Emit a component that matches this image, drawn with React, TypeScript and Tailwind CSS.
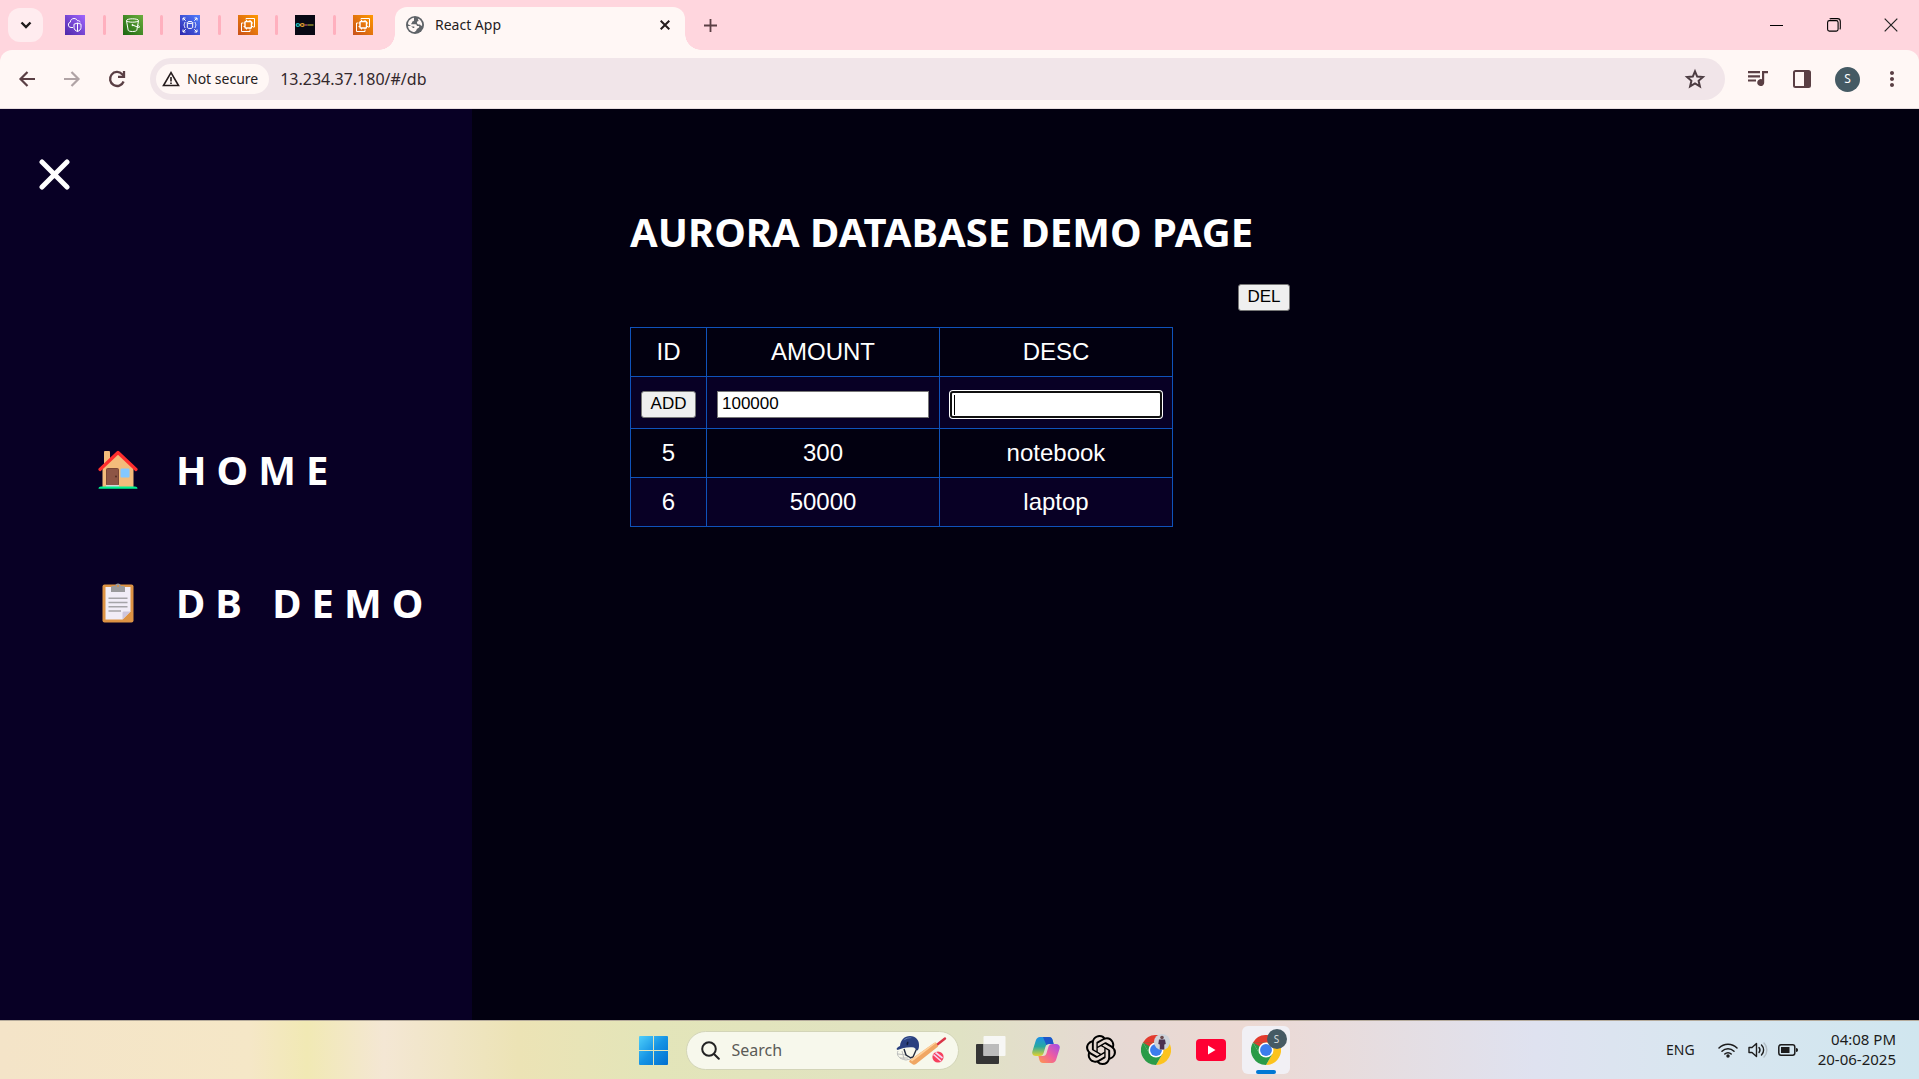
import React, { useId, useState } from "react";
import { MdMoreVert } from "react-icons/md";
import { SiOpenai } from "react-icons/si";

type IconProps = { className?: string };

/* ---------- Browser tab favicons ---------- */

function AwsTile({ from, to, children }: { from: string; to: string; children: React.ReactNode }) {
  const id = useId();
  return (
    <svg viewBox="0 0 20 20" className="size-5" aria-hidden="true">
      <defs>
        <linearGradient id={id} x1="0" y1="1" x2="1" y2="0">
          <stop offset="0" stopColor={from} />
          <stop offset="1" stopColor={to} />
        </linearGradient>
      </defs>
      <rect width="20" height="20" fill={`url(#${id})`} />
      <g fill="none" stroke="#fff" strokeWidth="1" strokeLinejoin="round">
        {children}
      </g>
    </svg>
  );
}

function VpcIcon() {
  return (
    <AwsTile from="#4d27a8" to="#a166ff">
      <path d="M8 12.500H6a2.700 2.700 0 0 1-.7-5.300C5.300 5 7 3.500 9 3.500c1.600 0 3 .9 3.600 2.300 1.300-.3 2.300.3 2.600 1.500" />
      <path d="M12.500 8l3.500 1.200v3.300c0 2-1.500 3.200-3.500 4-2-.8-3.500-2-3.500-4V9.200zM12.500 8v8.500" />
    </AwsTile>
  );
}

function S3Icon() {
  return (
    <AwsTile from="#1b660f" to="#6cae3e">
      <ellipse cx="9.500" cy="5.500" rx="6" ry="1.700" />
      <path d="M3.500 5.700l1.700 9.600c.5 1.600 8.100 1.600 8.600 0l1.700-9.600M9.500 10l5.500 2.200c2 .7 2.300-.6-.3-2" />
      <circle cx="9.500" cy="10" r=".6" fill="#fff" />
    </AwsTile>
  );
}

function RdsIcon() {
  return (
    <AwsTile from="#2e27ad" to="#527fff">
      <ellipse cx="10" cy="7.500" rx="2.700" ry="1" />
      <path d="M7.300 7.500v5c0 1.300 5.400 1.300 5.400 0v-5M5.300 7c-1 .5-.5 2.300-1.500 3 1 .7.5 2.500 1.500 3M14.700 7c1 .5.5 2.300 1.500 3-1 .7-.5 2.500-1.500 3" />
      <path d="M3 5.500V3h2.500M3 3l2.700 2.700M17 5.500V3h-2.500M17 3l-2.700 2.700M3 14.500V17h2.500M3 17l2.700-2.700M17 14.500V17h-2.500M17 17l-2.700-2.700" />
    </AwsTile>
  );
}

function Ec2Icon() {
  return (
    <AwsTile from="#c8511b" to="#ff9900">
      <rect x="7" y="6.500" width="6.500" height="6.500" rx=".8" strokeWidth="1.400" />
      <path d="M8 4.500V3.500h8.500v8.500h-1.500M5 8H3.500v8.500H12V15M8.500 6.500V5M12 6.500V5M7 8H5.500M7 11.500H5.500M13.500 8H15M13.500 11.500H15M8.500 13v1.500M12 13v1.500" />
    </AwsTile>
  );
}

function LoopIcon() {
  return (
    <svg viewBox="0 0 20 20" className="size-5" aria-hidden="true">
      <rect width="20" height="20" fill="#080914" />
      <path d="M5 10C4 8 1.200 8.200 1.200 10S4 12 5 10" fill="none" stroke="#20c8c8" strokeWidth="1.200" />
      <path d="M5 10c1-2 4.200-1.800 4.200 0S6 12 5 10" fill="none" stroke="#e9a02e" strokeWidth="1.200" />
      <path d="M10 10h2.500" stroke="#a0446d" strokeWidth="1.500" />
      <path d="M12.500 10h6" stroke="#8c8a2a" strokeWidth="1.500" />
    </svg>
  );
}

/* ---------- Window chrome ---------- */

const pinnedTabs = [
  { label: "VPC console", Icon: VpcIcon },
  { label: "S3 console", Icon: S3Icon },
  { label: "RDS console", Icon: RdsIcon },
  { label: "EC2 console", Icon: Ec2Icon },
  { label: "Portfolio", Icon: LoopIcon },
  { label: "EC2 instances", Icon: Ec2Icon },
];

function TabStrip() {
  return (
    <header className="flex h-[50px] bg-[#ffd6de]">
      <button aria-label="Search tabs" className="mt-2 ml-2 flex h-[34px] w-[35px] items-center justify-center rounded-xl bg-[#ffecef]">
        <svg viewBox="0 0 12 8" className="h-2 w-3" fill="none" stroke="#1f1a1b" strokeWidth="2.400">
          <path d="M1.500 1.500L6 6l4.500-4.500" />
        </svg>
      </button>
      <div className="ml-[3px] flex">
        {pinnedTabs.map(({ label, Icon }, i) => (
          <button key={label} aria-label={label} className="relative flex w-[58px] items-center justify-center even:w-[57px]">
            <Icon />
            {i < pinnedTabs.length - 1 && <span className="absolute top-[15px] -right-0.5 h-5 w-[3px] rounded-full bg-[#ffb0be]" />}
          </button>
        ))}
      </div>
      <div className="relative mt-[7px] ml-1 flex w-[290px] items-center rounded-t-xl bg-[#fff7f5] pr-3 pl-[11px]">
        <span className="absolute bottom-0 -left-4 size-4 bg-[radial-gradient(circle_at_0_0,transparent_15.5px,#fff7f5_16px)]" />
        <span className="absolute -right-4 bottom-0 size-4 bg-[radial-gradient(circle_at_100%_0,transparent_15.5px,#fff7f5_16px)]" />
        <svg viewBox="0 0 18 18" className="mb-2 size-[18px]" aria-hidden="true">
          <circle cx="9" cy="9" r="9" fill="#5f6368" />
          <path d="M2 8.300c0-3.500 2.600-6.100 6-6.600v1.600c.3 1.700-.5 2-1.700 2.300-.2 1.500-.8 1.700-1.300 2.700h4.500c1.300 0 1.200 1 1.500 1.800h1.500c.8 0 1 .7.5 1.400l-2.200 1.600c-.4 1.900-1.400 2.500-2.300 2.900C5 16 2.300 13.500 2 10h3l2 2h1.300v-1.500H6z" fill="#fff7f5" />
          <path d="M11.800 2.400c2.800 1.100 4.600 3.800 4.400 7-1 .6-1.800.2-2.200-.9-1.500.2-2.600-.2-3-1.500-.2-1.300.3-2 1.600-2z" fill="#fff7f5" />
        </svg>
        <span className="mb-2 ml-[11px] flex-1 text-sm text-[#251c1d]">React App</span>
        <button aria-label="Close tab" className="mb-2 flex size-4 items-center justify-center">
          <svg viewBox="0 0 10 10" className="size-2.5" stroke="#251c1d" strokeWidth="2">
            <path d="M.7.7l8.600 8.600M9.300.7L.7 9.300" />
          </svg>
        </button>
      </div>
      <button aria-label="New tab" className="ml-[15px] flex w-5 items-center justify-center">
        <svg viewBox="0 0 13 13" className="size-[13px]" stroke="#5a3f44" strokeWidth="1.800">
          <path d="M6.500 0v13M0 6.500h13" />
        </svg>
      </button>
      <div className="ml-auto flex">
        <button aria-label="Minimize" className="flex w-[57px] items-center justify-center">
          <svg viewBox="0 0 13 13" className="size-[13px]" stroke="#000" shapeRendering="crispEdges">
            <path d="M0 6.500h13" />
          </svg>
        </button>
        <button aria-label="Restore" className="flex w-[57px] items-center justify-center">
          <svg viewBox="0 0 14 14" className="size-3.5" fill="none" stroke="#000" strokeWidth="1.100">
            <rect x=".6" y="2.600" width="10.500" height="10.500" rx="1.800" />
            <path d="M2.700 1c.3-.3.800-.4 1.300-.4h6.500c1.700 0 2.800 1.200 2.800 2.800V10c0 .6-.2 1-.5 1.300" />
          </svg>
        </button>
        <button aria-label="Close" className="flex w-[57px] items-center justify-center">
          <svg viewBox="0 0 14 14" className="size-3.5" stroke="#222" strokeWidth="1.200">
            <path d="M.7.7l12.600 12.600M13.300.7L.7 13.300" />
          </svg>
        </button>
      </div>
    </header>
  );
}

function Toolbar() {
  return (
    <div className="bg-[#ffd6de]">
      <nav className="flex h-[59px] items-center rounded-t-xl border-b border-[#e6dcde] bg-[#fff7f5] px-[15px] text-[#5a3f44]">
        <button aria-label="Back">
          <svg viewBox="0 0 24 24" className="size-6" fill="none" stroke="currentColor" strokeWidth="2.200">
            <path d="M20 12H6M12.500 5L5.500 12l7 7" />
          </svg>
        </button>
        <button aria-label="Forward" className="ml-[21px] text-[#b0a3a5]">
          <svg viewBox="0 0 24 24" className="size-6" fill="none" stroke="currentColor" strokeWidth="2.200">
            <path d="M4 12h14M11.500 5l7 7-7 7" />
          </svg>
        </button>
        <button aria-label="Reload" className="ml-[21px]">
          <svg viewBox="0 0 24 24" className="size-6" fill="none" stroke="currentColor" strokeWidth="2.300">
            <path d="M18.600 14.500A7 7 0 1 1 17.200 7.200L19 9" />
            <path d="M19 4v5.800h-6" />
          </svg>
        </button>
        <div className="ml-[21px] flex h-[42px] flex-1 items-center rounded-full bg-[#f1e5e9] pr-[18px] pl-1.5">
          <button className="flex h-[30px] items-center gap-[7px] rounded-full bg-[#fff7f5] pr-[11px] pl-1.5 text-sm text-[#251c1d]">
            <svg viewBox="0 0 18 16" className="h-4 w-[18px]" fill="none" stroke="#251c1d" strokeWidth="1.600">
              <path d="M9 1.700L1.500 14.500h15zM9 6v4.500M9 11.500v1.600" />
            </svg>
            Not secure
          </button>
          <input aria-label="Address" defaultValue="13.234.37.180/#/db" className="ml-[11px] flex-1 bg-transparent text-base text-[#33282c] outline-none" />
          <button aria-label="Bookmark">
            <svg viewBox="0 0 24 24" className="size-6" fill="none" stroke="#4c3c42" strokeWidth="2">
              <path d="M12 4.300l2.200 5.300 5.700.5-4.300 3.700 1.300 5.600-4.900-3-4.900 3 1.300-5.600-4.300-3.700 5.700-.5z" />
            </svg>
          </button>
        </div>
        <button aria-label="Media controls" className="ml-[21px]">
          <svg viewBox="0 0 24 24" className="size-6" fill="currentColor">
            <path d="M2 4h12v2.200H2zM2 8.200h12v2.200H2zM2 12.400h8v2.200H2zM16 4h6v2.300h-3.800v9.200A3.500 3.500 0 1 1 16 12.300z" />
          </svg>
        </button>
        <button aria-label="Side panel" className="ml-5">
          <svg viewBox="0 0 24 24" className="size-6">
            <rect x="4" y="4" width="16" height="16" rx="1.500" fill="none" stroke="currentColor" strokeWidth="2" />
            <path d="M14 4h6v16h-6z" fill="currentColor" />
          </svg>
        </button>
        <button aria-label="Profile" className="ml-[21px] flex size-[25px] items-center justify-center rounded-full bg-[#455a64] text-xs text-white">S</button>
        <button aria-label="Menu" className="ml-5"><MdMoreVert className="size-6" /></button>
      </nav>
    </div>
  );
}

/* ---------- Web page ---------- */

function HouseIcon({ className }: IconProps) {
  return (
    <svg viewBox="0 0 40 40" className={className} aria-hidden="true">
      <path d="M6 2.200C6 1.500 6.500 1 7.200 1h3.600c.7 0 1.200.5 1.200 1.200V16H6z" fill="#f3bc7b" />
      <path d="M20 3L4.500 17.500V37h31V17.500z" fill="#f3bc7b" />
      <path d="M2 19.500L20 2.500l18 17" fill="none" stroke="#ff2d2d" strokeWidth="3.200" strokeLinecap="round" strokeLinejoin="round" />
      <rect x="8.500" y="18.500" width="12" height="17" rx="1" fill="#8d5545" stroke="#7a4636" />
      <circle cx="18" cy="26.500" r=".9" fill="#4c2a20" />
      <rect x="22.500" y="18.500" width="9" height="9" rx="1.200" fill="#84c8ff" />
      <path d="M8 35h13v2H8z" fill="#d6d6d6" />
      <path d="M.5 38.700c0-1.400 1.200-2.200 2.500-2.200h34c1.300 0 2.500.8 2.500 2.200z" fill="#00f08e" />
    </svg>
  );
}

function ClipboardIcon({ className }: IconProps) {
  return (
    <svg viewBox="0 0 40 40" className={className} aria-hidden="true">
      <rect x="4.500" y="1.500" width="31" height="38" rx="2" fill="#dd9344" />
      <path d="M7.500 4h25v24.500l-8 8h-17z" fill="#f1edf7" />
      <path d="M24.500 36.500V30c0-1 .6-1.500 1.500-1.500h6.500z" fill="#cdc5dc" />
      <path d="M13 4.500c0-.8.600-1.500 1.500-1.500h2.700c.4-3.200 5.200-3.200 5.600 0h2.700c.9 0 1.500.7 1.500 1.500V9H13z" fill="#9a9a9c" />
      <circle cx="20" cy="3" r="1" fill="#dd9344" />
      <path d="M10.500 15.200h19M10.500 19.500h19M10.500 23.700h19M10.500 28h12.500" stroke="#a5a4a8" strokeWidth="1.500" />
    </svg>
  );
}

const links = [
  { label: "HOME", href: "#/", Icon: HouseIcon },
  { label: "DB DEMO", href: "#/db", Icon: ClipboardIcon },
];

function Sidebar() {
  return (
    <aside className="w-[472px] shrink-0 bg-[#080025]">
      <button aria-label="Close menu" className="mt-[49px] ml-[38px] block">
        <svg viewBox="0 0 32 32" className="size-8" stroke="#fff" strokeWidth="5" strokeLinecap="round">
          <path d="M4 4l25 25M29 4L4 29" />
        </svg>
      </button>
      <nav className="mt-[250px] ml-[98px]">
        <ul className="space-y-[73px]">
          {links.map(({ label, href, Icon }) => (
            <li key={label}>
              <a href={href} className="flex h-[60px] items-center whitespace-nowrap text-white">
                <Icon className="size-10" />
                <span className="ml-[38px] text-[40px] leading-[60px] font-bold tracking-[10px]">{label}</span>
              </a>
            </li>
          ))}
        </ul>
      </nav>
    </aside>
  );
}

const rows = [
  { id: 5, amount: 300, desc: "notebook" },
  { id: 6, amount: 50000, desc: "laptop" },
];

const cell = "border border-[#0f52ba] text-center font-normal";
const formButton = "h-[27px] rounded-[3px] border border-[#767676] bg-[#efefef] pb-0.5 text-[17px] leading-5 text-black";

function DatabasePage() {
  const [amount, setAmount] = useState("100000");
  const [desc, setDesc] = useState("");
  return (
    <main className="flex-1 bg-[#020010] pt-24 pl-[158px] text-white">
      <div className="w-[660px]">
        <h1 className="text-[40px] leading-[54px] font-bold whitespace-nowrap">AURORA DATABASE DEMO PAGE</h1>
        <div className="mt-[25px] flex justify-end font-['Liberation_Sans',Arial,sans-serif]">
          <button className={`w-[52px] ${formButton}`}>DEL</button>
        </div>
        <table className="mt-4 w-[543px] table-fixed border-collapse font-['Liberation_Sans',Arial,sans-serif] text-2xl leading-7">
          <thead>
            <tr className="h-[49px]">
              <th scope="col" className={`w-[76px] ${cell}`}>ID</th>
              <th scope="col" className={cell}>AMOUNT</th>
              <th scope="col" className={cell}>DESC</th>
            </tr>
          </thead>
          <tbody>
            <tr className="h-[52px] bg-[#080025]">
              <td className={cell}>
                <button className={`mx-auto mt-1 block w-[55px] ${formButton}`}>ADD</button>
              </td>
              <td className={cell}>
                <input
                  aria-label="Amount"
                  value={amount}
                  onChange={(e) => setAmount(e.target.value)}
                  className="mx-auto mt-1 block h-[27px] w-[212px] border border-[#767676] bg-white px-1 pb-0.5 text-[17px] leading-5 text-black outline-none"
                />
              </td>
              <td className={cell}>
                <div className="relative mx-auto mt-1 h-[27px] w-[212px]">
                  <input
                    aria-label="Description"
                    value={desc}
                    onChange={(e) => setDesc(e.target.value)}
                    className="block size-full rounded-[3px] border-2 border-[#101010] bg-white px-0.5 text-[17px] text-black caret-transparent ring-1 ring-white outline-none"
                  />
                  <span className="absolute top-1 left-1 h-5 w-px bg-black" />
                </div>
              </td>
            </tr>
            {rows.map((row) => (
              <tr key={row.id} className="h-[49px] odd:bg-[#080025]">
                <td className={cell}>{row.id}</td>
                <td className={cell}>{row.amount}</td>
                <td className={cell}>{row.desc}</td>
              </tr>
            ))}
          </tbody>
        </table>
      </div>
    </main>
  );
}

/* ---------- Taskbar ---------- */

function WindowsLogo() {
  const id = useId();
  return (
    <svg viewBox="0 0 29 29" className="size-[29px]" aria-hidden="true">
      <defs>
        <linearGradient id={id} gradientUnits="userSpaceOnUse" x1="0" y1="0" x2="29" y2="29">
          <stop offset="0" stopColor="#4fcffa" />
          <stop offset=".5" stopColor="#1593e4" />
          <stop offset="1" stopColor="#006fd0" />
        </linearGradient>
      </defs>
      <path d="M0 1a1 1 0 0 1 1-1h13v14H0zM15 0h13a1 1 0 0 1 1 1v13H15zM0 15h14v14H1a1 1 0 0 1-1-1zM15 15h14v13a1 1 0 0 1-1 1H15z" fill={`url(#${id})`} />
    </svg>
  );
}

function CricketIcon() {
  return (
    <svg viewBox="0 0 52 32" className="h-8 w-[52px]" aria-hidden="true">
      <path d="M2 17c-2 4 1 8 8 9l4-1M2 20l9 1M4 24l8 0M6 17l2 8" fill="none" stroke="#b9bbbb" />
      <path d="M8 15l2 6 5 3M21 14l-4 9-3 1" fill="none" stroke="#222b3d" strokeWidth="1.400" />
      <path d="M.5 15c.5-1.500 2-2.500 3.500-3C4.500 6 8.500 2 14 2c6 0 9.500 4.500 9 10-.1 2-.6 3.500-1.500 4.500L18 13.500c-6-1-11.500.5-16.500 2.500z" fill="#2a4080" />
      <path d="M7.500 6.500C9 4 12.500 3 16 4c-3 0-6 .8-8.500 2.500z" fill="#6d87bd" />
      <path d="M10.500 10c0-2.500 2-3.500 2-1.500 0 1-.6 2.500-1.500 3z" fill="#111c3a" />
      <path d="M14 26c-1 1-1 2 0 2.500l3 2c1 .5 2 .3 3-.5L41.500 13c1-1 1-1.600.3-2.500L40.500 9c-.7-.8-1.600-.8-2.500 0z" fill="#f0a663" />
      <path d="M14.500 26L38 9c1-.7 1.500-.7 2.200 0L16 27.500z" fill="#ffd19b" />
      <path d="M42 10l7-5.500" stroke="#d93447" strokeWidth="2.400" strokeLinecap="round" />
      <circle cx="42" cy="23" r="5.600" fill="#f6405d" />
      <path d="M37.500 20.500l7.500 6.500M39.500 18.500l7 5.500" stroke="#f6d3f1" strokeWidth="1.600" />
    </svg>
  );
}

function TaskViewIcon() {
  return (
    <svg viewBox="0 0 30 28" className="h-7 w-[30px]" aria-hidden="true">
      <rect y="8" width="23" height="20" rx="1" fill="#353535" />
      <rect x="7.500" width="22" height="20" rx="1" fill="#fafafa" fillOpacity=".9" />
      <path d="M7.500 8H23v12H7.500z" fill="#bcbcbc" />
    </svg>
  );
}

function CopilotIcon() {
  const id = useId();
  return (
    <svg viewBox="0 0 28 26" className="h-[26px] w-7" aria-hidden="true">
      <defs>
        <linearGradient id={`${id}a`} x1="0" y1="0" x2="0" y2="1">
          <stop offset="0" stopColor="#1b8fe8" />
          <stop offset=".5" stopColor="#27a8a0" />
          <stop offset="1" stopColor="#e4d12e" />
        </linearGradient>
        <linearGradient id={`${id}b`} x1="1" y1="0" x2="0" y2="1">
          <stop offset="0" stopColor="#a04bea" />
          <stop offset=".5" stopColor="#ef5da0" />
          <stop offset="1" stopColor="#ff9a4a" />
        </linearGradient>
      </defs>
      <path d="M8 0h9c2 0 3 1 3.600 3l1 4H17c-2 0-3 1-3.600 3l-1.600 5.500C11 18 10 19 7.500 19H4c-3 0-4.500-2-3.500-5L3.800 3.500C4.500 1.300 6 0 8 0z" fill={`url(#${id}a)`} />
      <path d="M11 0h6c2 0 3 1 3.600 3l1 4H17c-1 0-2 .3-2.700 1z" fill="#1d55c9" />
      <path d="M20 26h-9c-2 0-3-1-3.600-3l-1-4H11c2 0 3-1 3.600-3l1.600-5.500C17 8 18 7 20.500 7H24c3 0 4.500 2 3.500 5l-3.300 10.500C23.500 24.700 22 26 20 26z" fill={`url(#${id}b)`} />
    </svg>
  );
}

function ChromeIcon() {
  return (
    <svg viewBox="0 0 48 48" className="size-[30px]" aria-hidden="true">
      <path d="M24 24L3.200 12A24 24 0 0 1 44.800 12z" fill="#e33b2e" />
      <path d="M24 12h20.800A24 24 0 0 1 24 48l10.400-18z" fill="#fcc31e" />
      <path d="M13.600 30L3.200 12A24 24 0 0 0 24 48l10.400-18z" fill="#2a9b48" />
      <path d="M3.200 12l10.400 18L24 12z" fill="#2a9b48" />
      <path d="M3.200 12L24 24V12z" fill="#e33b2e" />
      <circle cx="24" cy="24" r="12" fill="#fff" />
      <circle cx="24" cy="24" r="9.500" fill="#3b7ded" />
    </svg>
  );
}

const appButton = "relative flex size-12 items-center justify-center rounded-md";

function Taskbar() {
  return (
    <footer className="grid h-[59px] grid-cols-[1fr_auto_1fr] items-center border-t border-[#b5ab9c] bg-[linear-gradient(90deg,#f4e4c8_0%,#f5e7c7_13%,#f1e9b4_16%,#f4e7d4_20%,#ece3b5_27%,#e3e5b9_34%,#e0e2c4_50%,#e6d9d4_58%,#ecd9d3_65%,#dfe2f0_80%,#d9e6f0_88%,#d0e6ef_100%)] text-[#1c1c1c]">
      <div />
      <div className="flex items-center gap-2">
        <button aria-label="Start" className={appButton}><WindowsLogo /></button>
        <label className="flex h-[39px] w-[273px] items-center rounded-full border border-[#d3d5b8] bg-[#f7f8ec] pr-2.5 pl-3.5">
          <svg viewBox="0 0 19 19" className="size-[19px]" fill="none" stroke="#222" strokeWidth="2" strokeLinecap="round">
            <circle cx="8" cy="8" r="6.800" />
            <path d="M13 13l4.800 4.800" />
          </svg>
          <input type="search" placeholder="Search" aria-label="Search" className="ml-3 w-0 flex-1 bg-transparent text-base outline-none placeholder:text-[#5b5b57]" />
          <CricketIcon />
        </label>
        <div className="flex gap-[7px]">
          <button aria-label="Task view" className={appButton}><TaskViewIcon /></button>
          <button aria-label="Copilot" className={appButton}><CopilotIcon /></button>
          <button aria-label="ChatGPT" className={appButton}><SiOpenai className="size-[30px] text-black" /></button>
          <button aria-label="Chrome" className={appButton}>
            <ChromeIcon />
            <svg viewBox="0 0 16 16" className="absolute top-2 right-2.5 size-4" aria-hidden="true">
              <circle cx="8" cy="8" r="8" fill="#cdd3da" />
              <path d="M5 5.500h6l.8 4.500-1.500.5V15.500H5.800V10.500L4.300 10z" fill="#4b3050" />
              <circle cx="8" cy="3.500" r="1.800" fill="#6b4a4d" />
            </svg>
          </button>
          <button aria-label="YouTube" className={appButton}>
            <svg viewBox="0 0 30 22" className="h-[22px] w-[30px]" aria-hidden="true">
              <rect width="30" height="22" rx="4" fill="#ff0033" />
              <path d="M12 6.500v9l7.500-4.500z" fill="#fff" />
            </svg>
          </button>
          <button aria-label="Chrome, profile S" className={`${appButton} bg-[#f1f0f5]`}>
            <ChromeIcon />
            <span className="absolute top-[3px] right-[3px] flex size-5 items-center justify-center rounded-full bg-[#455a64] text-[10px] text-[#d5dcdf]">S</span>
            <span className="absolute bottom-0 left-3.5 h-1 w-5 rounded-full bg-[#0078d4]" />
          </button>
        </div>
      </div>
      <div className="flex items-center justify-end pr-[23px]">
        <span className="text-sm">ENG</span>
        <svg viewBox="0 0 20 16" className="ml-[23px] h-4 w-5" fill="none" stroke="#1c1c1c" strokeWidth="1.500" strokeLinecap="round" aria-label="Wi-Fi">
          <path d="M1 6a12.700 12.700 0 0 1 18 0M4 9.200a8.500 8.500 0 0 1 12 0M6.800 12a4.500 4.500 0 0 1 6.400 0" />
          <circle cx="10" cy="14" r="1" fill="#1c1c1c" />
        </svg>
        <svg viewBox="0 0 20 16" className="ml-2.5 h-4 w-5" fill="none" stroke="#1c1c1c" strokeWidth="1.400" strokeLinecap="round" strokeLinejoin="round" aria-label="Volume">
          <path d="M1 5.500h3L8.500 1.500v13L4 10.500H1zM11 5.500a4 4 0 0 1 0 5M13.500 3a7 7 0 0 1 0 10" />
          <path d="M16 1a10 10 0 0 1 0 14" stroke="#b2bdc4" />
        </svg>
        <svg viewBox="0 0 20 14" className="ml-2.5 h-3.5 w-5" aria-label="Battery">
          <rect x=".8" y="1.800" width="16" height="10.500" rx="2.200" fill="none" stroke="#1c1c1c" strokeWidth="1.500" />
          <rect x="3" y="4" width="8.500" height="6" fill="#1c1c1c" />
          <path d="M18 5c1.300 0 2 .8 2 2s-.7 2-2 2z" fill="#1c1c1c" />
        </svg>
        <time dateTime="2025-06-20T16:08" className="mb-0.5 ml-5 text-right text-[15px] leading-5">
          04:08 PM
          <br />
          20-06-2025
        </time>
      </div>
    </footer>
  );
}

export default function App() {
  return (
    <div className="flex min-h-screen flex-col font-['Noto_Sans','Open_Sans',sans-serif]">
      <TabStrip />
      <Toolbar />
      <div className="flex flex-1">
        <Sidebar />
        <DatabasePage />
      </div>
      <Taskbar />
    </div>
  );
}
